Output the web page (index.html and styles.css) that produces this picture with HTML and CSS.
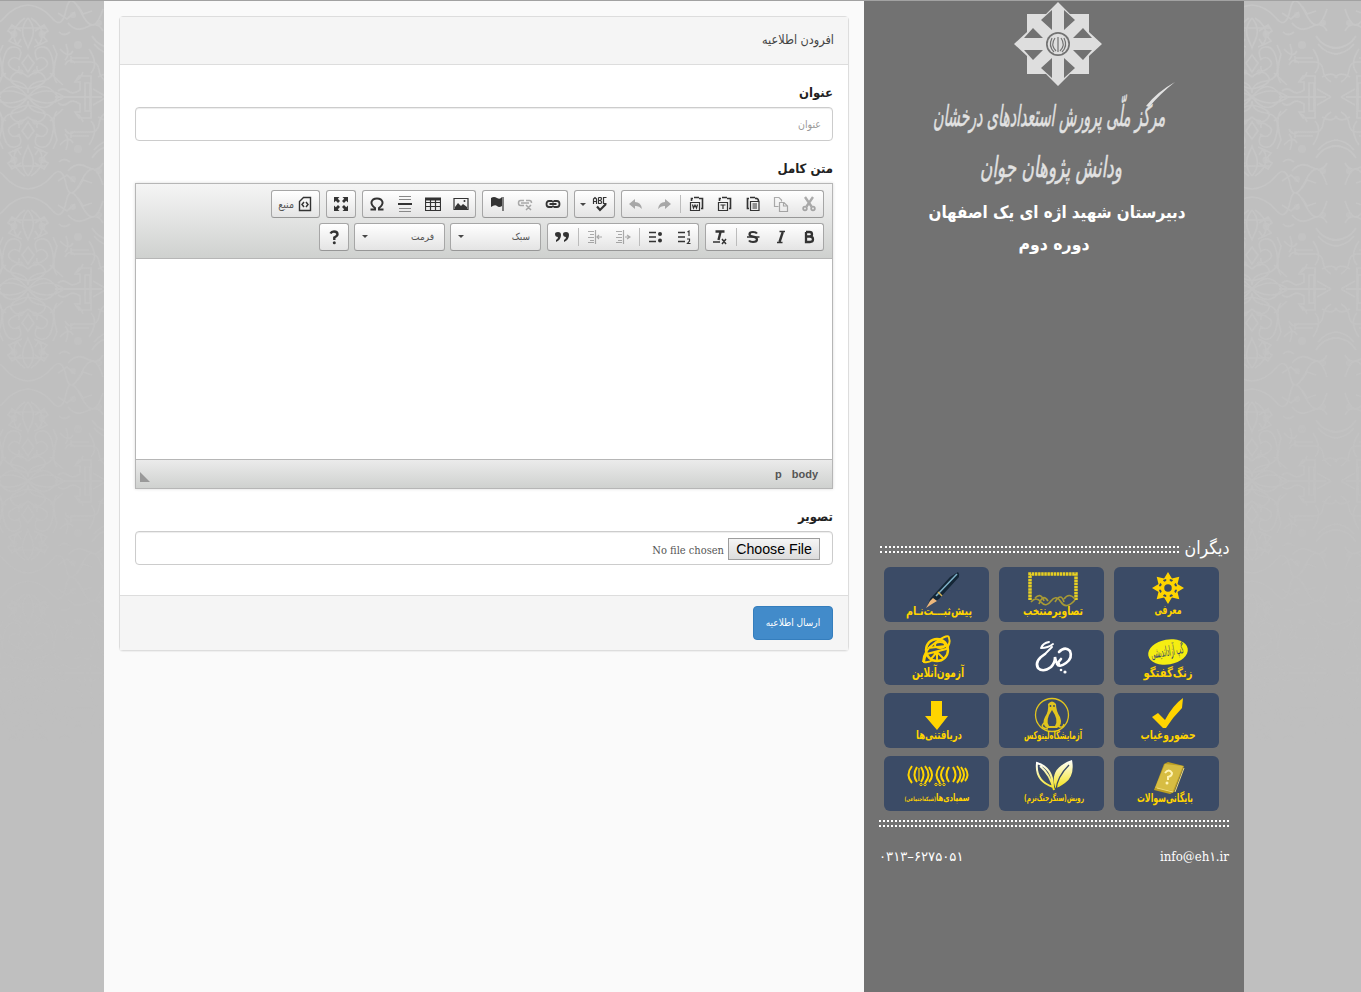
FILE: index.html
```html
<!DOCTYPE html>
<html lang="fa" dir="rtl">
<head>
<meta charset="utf-8">
<title>افرودن اطلاعیه</title>
<link rel="stylesheet" href="styles.css">
</head>
<body>
<div class="page">
  <div class="wall">
    <svg class="wall-art" viewBox="0 0 117 992" width="117" height="992">
      <defs>
        <linearGradient id="fade" x1="0" y1="0" x2="0" y2="1"><stop offset="0" stop-color="#fff"/><stop offset=".3" stop-color="#fff" stop-opacity=".65"/><stop offset=".75" stop-color="#fff" stop-opacity="0"/></linearGradient>
        <mask id="fadeMask"><rect width="117" height="992" fill="url(#fade)"/></mask>
        <g id="quarter" fill="none" stroke="#c6c6c6" stroke-width="1.7">
          <path d="M0 4Q14 5 24 17T38 9 54 13 75 8M0 17Q9 28 3 40T0 52M3 17Q14 24 14 34T6 46M7 30l9-6 4 6-6 4 5 6-8 4-4-6M0 27h18M0 54l6 8-6 9-5-9ZM8 59q6-5 10 0t-3 9q-7 5-6-3M9 58Q4 48 13 46T25 61 14 80 0 92M0 76q10-9 16-1T0 88M0 96Q16 75 30 96M0 96Q20 84 36 96M27 62q-3 14 2 20M22 72l13 12M25 44l4 9-3 12"/>
          <path d="M27 96h47M30 90q5-4 10 0t12-1v-8h-5l4-6h12v20M57 96V82h5v14M43 55V61h20q7 0 8 8t8 12M43 57h18M38 43q4 12-1 16M32 48q9 10 13 2M37 64q4-8 10-2M55 71q-2 6-6 8M30 12l9 6 8-7M40 22q8 10 19 4t16 4M50 5l5 8 9-3M31 31q5 5 11 0M64 35q8 13 24 12M66 43q8 10 20 10M61 48q10 15 2 24M65 88l14 8M70 76q10-6 15 1"/>
        </g>
        <g id="motif"><use href="#quarter"/><use href="#quarter" transform="translate(0 192) scale(1 -1)"/>
          <g fill="#c6c6c6" opacity=".8"><circle cx="14" cy="33" r="3.500"/><circle cx="50" cy="44" r="4"/><circle cx="45" cy="14" r="3"/><circle cx="71" cy="22" r="3"/><circle cx="14" cy="159" r="3.500"/><circle cx="50" cy="148" r="4"/><circle cx="45" cy="178" r="3"/><circle cx="71" cy="170" r="3"/><circle cx="7" cy="71" r="2.500"/><circle cx="7" cy="121" r="2.500"/></g></g>
        <g id="repeat"><use href="#motif"/><use href="#motif" transform="translate(168) scale(-1 1)"/></g>
        <pattern id="damaskRight" width="168" height="192" patternUnits="userSpaceOnUse" x="8"><use href="#repeat"/></pattern>
        <pattern id="damaskLeft" width="168" height="192" patternUnits="userSpaceOnUse" x="28"><use href="#repeat"/></pattern>
      </defs>
      <g mask="url(#fadeMask)"><rect width="117" height="992" fill="url(#damaskRight)"/></g>
    </svg>
  </div>

  <aside class="sidebar">
    <svg class="emblem" viewBox="864 0 380 196" width="380" height="196">
      <g transform="translate(1058 44)">
        <path fill="#dedede" d="M0-42L12-30H31V-12L44 0 31 12V30H12L0 42-12 30H-31V12L-44 0-31-12V-30H-12Z"/>
        <g fill="#727272">
          <path d="M-6-34L-17-24-6-14ZM6-34L17-24 6-14ZM-6 34L-17 24-6 14ZM6 34L17 24 6 14Z"/><path d="M-34-6L-25-16-15-6ZM-34 6L-25 16-15 6ZM34-6L25-16 15-6ZM34 6L25 16 15 6Z"/>
          <circle r="12"/>
        </g>
        <circle r="10.300" fill="#dedede"/>
        <path d="M0-7V8M-3-6Q-8 1-2 7M3-6Q8 1 2 7M-6-6Q-10 2-4 8M6-6Q10 2 4 8" fill="none" stroke="#727272" stroke-width="1.2"/>
      </g>
      <g class="calligraphy">
        <text transform="translate(1049 126) skewX(-8)" font-size="29" textLength="232" lengthAdjust="spacingAndGlyphs">مرکز ملّی پرورش استعدادهای درخشان</text>
        <path d="M1146 106Q1157 92 1175 82Q1161 93 1149 107Z"/>
        <text transform="translate(1051 177) skewX(-8)" font-size="29" textLength="142" lengthAdjust="spacingAndGlyphs">ودانش پژوهان جوان</text>
      </g>
    </svg>
    <div class="school">
      <svg width="264" height="32"><text x="132" y="22" font-size="17" textLength="257" lengthAdjust="spacingAndGlyphs">دبیرستان شهید اژه ای یک اصفهان</text></svg>
      <svg class="second" width="80" height="32"><text x="40" y="22" font-size="17" textLength="71" lengthAdjust="spacingAndGlyphs">دوره دوم</text></svg>
    </div>

    <div class="others-head">
      <svg width="46" height="26"><text x="23" y="19" font-size="18" textLength="45" lengthAdjust="spacingAndGlyphs">دیگران</text></svg>
      <span class="dots"></span>
    </div>
    <div class="tiles">
      <svg class="tile" viewBox="0 0 105 55">
        <g transform="translate(54 21)" fill="#ffd400"><path id="petal" d="M-1.800-6V-9L-4.500-8.500 0-16 4.500-8.500 1.800-9V-6Z"/><use href="#petal" transform="rotate(45)"/><use href="#petal" transform="rotate(90)"/><use href="#petal" transform="rotate(135)"/><use href="#petal" transform="rotate(180)"/><use href="#petal" transform="rotate(225)"/><use href="#petal" transform="rotate(270)"/><use href="#petal" transform="rotate(315)"/><circle r="5.500" fill="none" stroke="#ffd400" stroke-width="3.500"/></g>
        <text x="54" y="47" font-size="12" textLength="27" lengthAdjust="spacingAndGlyphs">معرفی</text>
      </svg>
      <svg class="tile" viewBox="0 0 105 55">
        <path d="M31 33V7H77V33" fill="none" stroke="#e8cf22" stroke-width="3.500" stroke-dasharray="2.500 .6"/><path d="M32 35q5-6 10 0t10-1 10 1 14-2M36 31q6-6 9 3M40 37q4-11 9-3M56 35q6-10 9 0M65 32q5-7 11 0" fill="none" stroke="#a89a35" stroke-width="1.700"/>
        <text x="54" y="48" font-size="12" textLength="60" lengthAdjust="spacingAndGlyphs">تصاویرمنتخب</text>
      </svg>
      <svg class="tile" viewBox="0 0 105 55">
        <path d="M74 5q2 2 1 5L55 32l-7 4-5 4 3-8L66 10Z" fill="#142636"/><path d="M73 7L52 29" stroke="#7eb1c7" stroke-width="1.500"/><path d="M49 31l4 3-5 3-6 4 4-7Z" fill="#edb77c"/><path d="M54 25l4 4" stroke="#d8b354" stroke-width="1.500"/>
        <text x="55" y="48" font-size="12" textLength="66" lengthAdjust="spacingAndGlyphs">پیش‌ثبـــت‌نـام</text>
      </svg>
      <svg class="tile" viewBox="0 0 105 55">
        <ellipse cx="54" cy="22" rx="20" ry="12.500" transform="rotate(-10 54 22)" fill="#f5ed12"/>
        <text class="ink" transform="translate(54 26) rotate(-10)" font-size="14" textLength="33" lengthAdjust="spacingAndGlyphs">گپ آزاداندیشی</text>
        <text x="54" y="47" font-size="12" textLength="49" lengthAdjust="spacingAndGlyphs">زنگ‌گفتگو</text>
      </svg>
      <svg class="tile" viewBox="0 0 105 55">
        <g fill="none" stroke="#fff" stroke-linecap="round"><path stroke-width="2.600" d="M60 22Q66 16 71 21Q74 28 67 33Q60 38 58 34L62 29"/><path stroke-width="2.600" d="M46 24Q35 31 39 38Q44 43 52 37Q56 33 56 27Q57 34 60 34"/><path stroke-width="1.900" d="M42 18Q44 13 50 12M42 18Q49 18 54 14M46 24L53 17"/></g><circle cx="66" cy="42" r="1.600" fill="#fff"/><circle cx="62" cy="40" r="1.300" fill="#fff"/>
      </svg>
      <svg class="tile" viewBox="0 0 105 55">
        <g fill="none" stroke="#ffd400" stroke-width="2"><circle cx="53" cy="20" r="11" stroke-width="2.400"/><path d="M39 32Q39 21 52 12T65 8q2 5-3 11L43 24q-3 4-3 8 4 1 9-2M44 18l18-2M53 22v8M53 22l-6 7M53 22l7 7"/><ellipse cx="56" cy="15" rx="5" ry="3"/></g>
        <text x="54" y="47" font-size="13" textLength="52" lengthAdjust="spacingAndGlyphs">آزمون‌آنلاین</text>
      </svg>
      <svg class="tile" viewBox="0 0 105 55">
        <path d="M38 24l6-4 7 7Q59 12 69 5L68 15Q59 24 52 35H49Z" fill="#ffd400"/>
        <text x="54" y="46" font-size="12" textLength="55" lengthAdjust="spacingAndGlyphs">حضوروغیاب</text>
      </svg>
      <svg class="tile" viewBox="0 0 105 55">
        <circle cx="53" cy="22" r="16.500" fill="none" stroke="#e2c51e" stroke-width="1.300"/><path d="M49 11q4-5 8 0 0 7 4 13 3 8-3 11H48q-6-4-2-11 4-6 3-13Z" fill="#e2c51e"/><path d="M53 17q-7 10-3 16h6q4-6-3-16Z" fill="#3b4b66"/><circle cx="51.500" cy="13" r=".9" fill="#3b4b66"/><circle cx="55" cy="13" r=".9" fill="#3b4b66"/><path d="M45 30q-5 5 4 6M59 33q5 3 6-2" fill="none" stroke="#e2c51e" stroke-width="1.500"/>
        <text x="54" y="46" font-size="11" textLength="58" lengthAdjust="spacingAndGlyphs">آزمایشگاه‌لینوکس</text>
      </svg>
      <svg class="tile" viewBox="0 0 105 55">
        <path d="M47 8H58V23H64L53 37 41 23H47Z" fill="#ffd400"/>
        <text x="55" y="46" font-size="12" textLength="46" lengthAdjust="spacingAndGlyphs">دریافتنی‌ها</text>
      </svg>
      <svg class="tile" viewBox="0 0 105 55">
        <path d="M50 8l4-2 16 4-10 26-4 2-16-4Z" fill="#bd9f22"/><path d="M51 8l18 2-10 25-18-3Z" fill="#d7bd43"/><path d="M43 32l16 4M61 36L70 12" stroke="#f0dc7a" fill="none"/><path d="M51 17q4-5 7 0 0 3-4 4v3" fill="none" stroke="#fff4b5" stroke-width="2"/><circle cx="53" cy="27" r="1.5" fill="#fff4b5"/>
        <text x="51" y="46" font-size="12" textLength="56" lengthAdjust="spacingAndGlyphs">بایگانی‌سوالات</text>
      </svg>
      <svg class="tile" viewBox="0 0 105 55">
        <defs><linearGradient id="leaf" x1="0" y1="0" x2="0" y2="1"><stop stop-color="#fff"/><stop offset="1" stop-color="#f4e31b"/></linearGradient></defs>
        <path d="M56 31Q50 12 73 4Q76 20 66 27T56 31Z" fill="url(#leaf)"/><path d="M54 31Q54 12 38 7Q36 25 54 31ZM41 10Q51 18 55 34" fill="none" stroke="url(#leaf)" stroke-width="2"/><path d="M57 34Q58 21 70 9" fill="none" stroke="#3b4b66" stroke-width="1.3"/>
        <text x="55" y="45" font-size="9" textLength="60" lengthAdjust="spacingAndGlyphs">رویش(سنگرجنگ‌نرم)</text>
      </svg>
      <svg class="tile" viewBox="0 0 105 55">
        <g fill="none" stroke="#ffd400" stroke-width="2"><path d="M28 10q-7 9 0 17M33 11q-5 8 0 15M37 11q5 8 0 15M41 10q7 9 0 17M45 11q6 8 0 15M56 10q-7 9 0 17M60 11q-6 8 0 15M65 11q-5 8 0 15M69 11q5 8 0 15M73 10q7 9 0 17M77 11q6 8 0 15M81 12q5 7 0 13"/><path d="M35 12v13" stroke-width="1.2"/><g stroke-width="1"><circle cx="37" cy="28.500" r="1.2"/><circle cx="41" cy="28.500" r="1.2"/><circle cx="52" cy="28.500" r="1.2"/><circle cx="56" cy="28.500" r="1.2"/><circle cx="60" cy="28.500" r="1.2"/></g></g>
        <text x="53" y="45" font-size="10" textLength="65" lengthAdjust="spacingAndGlyphs">سمپادی‌ها<tspan font-size="6">(شبکه‌اجتماعی)</tspan></text>
      </svg>
    </div>
    <div class="dots closing"></div>
    <div class="contact"><span dir="ltr">info@eh۱.ir</span><bdo class="phone" dir="ltr">۰۳۱۳–۶۲۷۵۰۵۱</bdo></div>
  </aside>

  <main class="content">
    <section class="panel">
      <header class="panel-head">افرودن اطلاعیه</header>
      <div class="panel-body">
        <div class="group"><div class="label">عنوان</div><div class="field"><span class="placeholder">عنوان</span></div></div>
        <div class="group"><div class="label">متن کامل</div>
          <div class="editor">
            <div class="toolbar">
              <div class="row">
                <div class="tools">
                  <svg class="off" viewBox="0 0 16 16"><path d="M4 1l6.500 9.500M12 1L5.500 10.500" stroke-width="2.400"/><circle cx="4" cy="12.500" r="1.800" stroke-width="1.800"/><circle cx="12" cy="12.500" r="1.800" stroke-width="1.800"/></svg>
                  <svg class="off" viewBox="0 0 16 16"><path d="M5.500 10.500H1.500V1.500H6L8.500 4V5.500M6.500 6.500H11L14.500 10V15.500H6.500ZM10.500 6.500V10H14"/></svg>
                  <svg viewBox="0 0 16 16"><path d="M4 2.500H2.500V12.500H4M10 2.500Q13.500 2 13.500 5M5 1.500h5" stroke-width="1.700"/><path d="M5.500 5.500H14V14.500H5.500ZM7.500 8H12M7.500 10H12M7.500 12H12"/></svg>
                  <svg viewBox="0 0 16 16"><path d="M4 2.500H2.500V5M10 2.500H13.500V12.500H12M5 1.500h5" stroke-width="1.600"/><path d="M1.500 6.500H10.500V14.500H1.500ZM3.500 9H8.500M6 9V13"/></svg>
                  <svg viewBox="0 0 16 16"><path d="M4 2.500H2.500V5M10 2.500H13.500V12.500H12M5 1.500h5" stroke-width="1.600"/><path d="M1.500 6.500H10.500V14.500H1.500ZM3.500 8.500L4.500 12 6 9 7.500 12 8.500 8.500"/></svg>
                  <i class="sep"></i>
                  <svg class="off" viewBox="0 0 16 16"><path class="solid" d="M15 8L9 3V6Q3 6 2 13 5 9.500 9 10V13Z"/></svg>
                  <svg class="off" viewBox="0 0 16 16"><path class="solid" d="M1 8L7 3V6Q13 6 14 13 11 9.500 7 10V13Z"/></svg>
                </div>
                <div class="tools spell"><svg viewBox="0 0 16 16"><path d="M1.500 8V3L3 1.500 4.500 3V8M1.500 5.500H4.500M6.500 1.500V7.500H9L9.700 6 8.500 4.500 9.500 3 9 1.500H6.500M6.500 4.500H9M14.500 1.500H11.500V7.500H14.500"/><path d="M5 10.500L8 14 14 8" stroke-width="2.200"/></svg><i class="caret"></i></div>
                <div class="tools">
                  <svg viewBox="0 0 16 16"><path d="M7.500 5H4Q1.500 5 1.500 8T4 11H7.500M8.500 5H12Q14.500 5 14.500 8T12 11H8.500M4.500 8H11.500M8 5V6.500M8 9.500V11" stroke-width="1.800"/></svg>
                  <svg class="off" viewBox="0 0 16 16"><path d="M7 4.500H3.500Q1.500 4.500 1.500 7T3.500 9.500H7M9 4.500H12.500Q14.500 4.500 14.500 7M4 7H12M9 9L14 14M14 9L9 14" stroke-width="1.500"/></svg>
                  <svg viewBox="0 0 16 16"><path class="solid" d="M2 2Q5 0 8 2T13 1V10Q10 12 8 10T2 11Z"/><path d="M14 1V15"/></svg>
                </div>
                <div class="tools">
                  <svg viewBox="0 0 16 16"><path d="M1 2.500H15V13.500H1Z"/><path class="solid" d="M2 13V11L5 7 8 10 10 8 14 11V13Z"/><circle class="solid" cx="11.500" cy="5" r="1"/></svg>
                  <svg viewBox="0 0 16 16"><path d="M.5 2.500H15.500V14.500H.5ZM.5 6.500H15.500M.5 10.500H15.500M5.500 4V14.500M10.500 4V14.500"/><path d="M0 3H16" stroke-width="3"/></svg>
                  <svg viewBox="0 0 16 16"><path d="M2 .5H14M2 3.500H14M2 12.500H14M2 15.500H14" stroke="#888"/><path d="M1 8H15" stroke-width="2"/></svg>
                  <svg viewBox="0 0 16 16"><path d="M1.500 13.500H6V12Q2 9 2.500 6 3.500 2.500 8 2.500T13.500 6Q14 9 10 12V13.500H14.500" stroke-width="2"/></svg>
                </div>
                <div class="tools"><svg viewBox="0 0 16 16"><path class="solid" d="M1 1H6.500L4.800 2.800 7 5 5 7 2.800 4.800 1 6.500ZM15 1V6.500L13.200 4.800 11 7 9 5 11.200 2.800 9.500 1ZM1 15V9.500L2.800 11.200 5 9 7 11 4.800 13.200 6.500 15ZM15 15H9.500L11.200 13.200 9 11 11 9 13.200 11.200 15 9.500Z"/></svg></div>
                <div class="tools source"><svg viewBox="0 0 16 16"><path d="M6.500 1.500H13.500V14.500H2.500V5.500Z" stroke-width="1.400"/><path d="M7 6L5 8.500 7 11M9 6L11 8.500 9 11" stroke-width="1.500"/></svg><span class="tiny">منبع</span></div>
              </div>
              <div class="row">
                <div class="tools">
                  <svg viewBox="0 0 16 16"><path d="M5 3H8.500Q11 3 11 5.300 11 7.500 8.500 7.500H5M5 7.500H9Q12 7.500 12 10.300 12 13 9 13H5ZM5 3V13" stroke-width="2.300"/></svg>
                  <svg viewBox="0 0 16 16"><path d="M6.500 2.500H12M4 13.500H9.500" stroke-width="1.600"/><path d="M9.800 3L6.500 13" stroke-width="2.400"/></svg>
                  <svg viewBox="0 0 16 16"><path d="M12 4.500Q11 3 8 3 4.500 3 4.500 5.200 4.500 7 8 7.600 12 8.300 12 10.500 12 13 8 13 5 13 4 11.500" stroke-width="2.200"/><path d="M2 8H14.500" stroke-width="1.500"/></svg>
                  <i class="sep"></i>
                  <svg viewBox="0 0 16 16"><path d="M3.500 2.500H12.500M8.500 3L6.500 11" stroke-width="2.400"/><path d="M1 13H8M10 10L14 15M14 10L10 15" stroke-width="1.500"/></svg>
                </div>
                <div class="tools lists">
                  <svg viewBox="0 0 16 16"><path d="M2 3.500H9M2 8H9M2 12.500H9" stroke-width="1.600"/><path d="M11.500 3L13 2V7M11 10H13.500V12L11.500 14.500H14.500"/></svg>
                  <svg viewBox="0 0 16 16"><path d="M1 3.500H8M1 8H8M1 12.500H8" stroke-width="1.600"/><circle class="solid" cx="12" cy="5" r="2"/><circle class="solid" cx="12" cy="11.500" r="2"/></svg>
                  <i class="sep"></i>
                  <svg class="off" viewBox="0 0 16 16"><path d="M1 2.500H7M3 5.500H7M1 8.500H7M3 11.500H7M1 13.500H7M8.500 1V15M10 8H15M12 6L15 8 12 10"/></svg>
                  <svg class="off" viewBox="0 0 16 16"><path d="M1 2.500H7M3 5.500H7M1 8.500H7M3 11.500H7M1 13.500H7M8.500 1V15M10 8H15M12 6L10 8 12 10"/></svg>
                  <i class="sep"></i>
                  <svg viewBox="0 0 16 16"><path class="solid" d="M1 5Q1 3 4 3 7 3 7 6 7 11 2 13V11Q4 10 4 8 1 8 1 5ZM9 5Q9 3 12 3 15 3 15 6 15 11 10 13V11Q12 10 12 8 9 8 9 5Z"/></svg>
                </div>
                <div class="tools combo"><span class="tiny">سبک</span><i class="caret"></i></div>
                <div class="tools combo"><span class="tiny">فرمت</span><i class="caret"></i></div>
                <div class="tools help"><svg viewBox="0 0 16 16"><path d="M4.500 4.500Q5.500 2.500 8 2.500 11.500 2.500 11.500 5.300 11.500 7 8.300 8.500V11" stroke-width="2.400"/><circle class="solid" cx="8.300" cy="13.700" r="1.500"/></svg></div>
              </div>
            </div>
            <div class="canvas"></div>
            <div class="status"><span>body</span><span>p</span><i class="grip"></i></div>
          </div>
        </div>
        <div class="group"><div class="label">تصویر</div><div class="field file"><span class="choose">Choose File</span><span class="none">No file chosen</span></div></div>
      </div>
      <footer class="panel-foot"><button class="send">ارسال اطلاعیه</button></footer>
    </section>
  </main>
  <div class="wall">
    <svg class="wall-art" viewBox="0 0 104 992" width="104" height="992"><g mask="url(#fadeMask)"><rect width="104" height="992" fill="url(#damaskLeft)"/></g></svg>
  </div>
</div>
</body>
</html>
```
FILE: styles.css
```css
* { box-sizing: border-box; }
body { margin: 0; background: #bfbfbf; font-family: "DejaVu Sans Condensed", "DejaVu Sans", sans-serif; }
.page { display: grid; grid-template-columns: 117px 380px 760px 104px; height: 992px; overflow: hidden; border-top: 1px solid #a2a2a2; }
.wall { background: #bfbfbf; overflow: hidden; }
.wall-art { display: block; }
.sidebar { background: #727272; color: #fff; display: flex; flex-direction: column; }
.emblem { display: block; margin-top: -1px; }
.sidebar svg { overflow: visible; }
.sidebar text { text-anchor: middle; direction: rtl; fill: #fff; }
.sidebar .calligraphy { fill: #e2e2e2; }
.sidebar .calligraphy text { fill: #e2e2e2; stroke: #e2e2e2; stroke-width: .5; }
.school { height: 339px; display: flex; flex-direction: column; align-items: center; padding-left: 5px; }
.school svg { display: block; }
.school text { font-weight: bold; }
.school .second { margin-right: 5px; }
.others-head { display: flex; align-items: center; gap: 5px; height: 26px; padding: 0 14px 0 16px; }
.dots { flex: 1; height: 7px; border-top: 2px dotted #fff; border-bottom: 2px dotted #fff; }
.others-head .dots { margin-top: 3px; }
.tiles { display: grid; grid-template-columns: repeat(3, 105px); gap: 8px 10px; padding: 6px 25px 0 20px; }
.tile { display: block; width: 105px; height: 55px; border-radius: 6px; background: #3b4b66; }
.sidebar .tile text { fill: #ffd400; font-weight: bold; }
.sidebar .tile .ink { fill: #3b4b66; font-weight: normal; }
.closing { flex: none; margin: 9px 15px 1px; }
.contact { display: flex; justify-content: space-between; padding: 18px 15px 0; font: 13.200px/22px "DejaVu Serif Condensed", "DejaVu Sans Condensed", serif; }
.phone { font-family: "DejaVu Sans", sans-serif; font-size: 13.200px; }
.content { background: #fafafa; padding: 15px; }
.panel { background: #fff; border: 1px solid #ddd; border-radius: 4px; box-shadow: 0 1px 1px rgba(0, 0, 0, .05); }
.panel-head { height: 48px; line-height: 46px; padding: 0 14px; background: #f5f5f5; border-bottom: 1px solid #ddd; font-size: 12.500px; color: #444; }
.panel-body { padding: 15px; }
.group { margin-bottom: 15px; }
.label { height: 27px; line-height: 25px; font-size: 13px; font-weight: bold; color: #222; }
.field { height: 34px; border: 1px solid #ccc; border-radius: 4px; padding: 0 11px; box-shadow: inset 0 1px 1px rgba(0, 0, 0, .075); display: flex; align-items: center; }
.placeholder { font-size: 10.5px; color: #999; }
.editor { height: 306px; border: 1px solid #b6b6b6; display: flex; flex-direction: column; box-shadow: 0 0 3px rgba(0, 0, 0, .15); }
.toolbar { height: 75px; padding: 6px 8px 0; background: linear-gradient(#f5f5f5, #cfd1cf); border-bottom: 1px solid #b6b6b6; }
.row { display: flex; gap: 6px; height: 28px; margin-bottom: 5px; }
.tools { display: flex; align-items: center; height: 28px; border: 1px solid #a6a6a6; border-bottom-color: #979797; border-radius: 3px; background: linear-gradient(#fff, #e4e4e4); }
.tools svg { width: 28px; height: 16px; padding: 0 6px; fill: none; stroke: #333; stroke-width: 1.2; }
.tools .off { opacity: .38; }
.tools .solid { fill: #333; stroke: none; }
.sep { width: 1px; height: 18px; background: #bcbcbc; margin: 0 2px; }
.caret { border: 3px solid transparent; border-top-color: #474747; border-bottom: 0; }
.spell { width: 41px; }
.source { width: 49px; }
.tiny { font-size: 10px; color: #555; }
.source .tiny { font-size: 10.500px; margin-right: -3px; }
.lists { width: 152px; }
.combo { width: 91px; justify-content: space-between; padding: 0 10px 2px 7px; }
.combo + .combo { margin-right: -1px; }
.help { margin-right: -1px; }
.canvas { flex: 1; }
.status { height: 29px; border-top: 1px solid #b6b6b6; background: linear-gradient(#ebebeb, #cfd1cf); display: flex; align-items: center; gap: 10px; padding: 0 14px 0 4px; font: bold 11px "Liberation Sans", sans-serif; color: #555; }
.grip { margin-right: auto; margin-top: 6px; border-left: 10px solid #999; border-top: 10px solid transparent; }
.file { padding-right: 12px; gap: 4px; }
.choose { border: 1px solid #9d9d9d; background: linear-gradient(#f5f5f5, #dcdcdc); width: 92px; height: 22px; margin-top: 1px; text-align: center; font: 14.200px/20px "Liberation Sans", sans-serif; color: #000; }
.none { font: 11px "DejaVu Serif Condensed", serif; color: #555; margin-top: 4px; }
.panel-foot { height: 55px; padding: 10px 15px; border-top: 1px solid #ddd; background: #f5f5f5; }
.send { display: block; width: 80px; height: 34px; padding: 0 0 2px; border: 1px solid #357ebd; border-radius: 4px; background: #428bca; color: #fff; font: 10px "DejaVu Sans Condensed", "DejaVu Sans", sans-serif; }
```
